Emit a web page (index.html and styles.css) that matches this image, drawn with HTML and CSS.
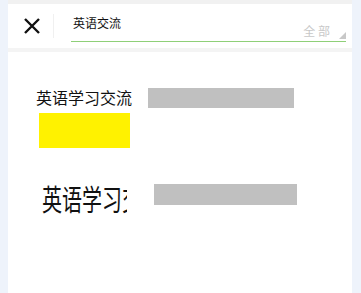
FILE: index.html
```html
<!DOCTYPE html>
<html>
<head>
<meta charset="utf-8">
<link rel="stylesheet" href="styles.css">
</head>
<body>
<div class="page">
  <div class="status"></div>
  <div class="header">
    <div class="close">
      <svg width="18" height="18" viewBox="0 0 18 18"><path d="M2 2 L16 16 M16 2 L2 16" stroke="#111" stroke-width="2.4" fill="none"/></svg>
    </div>
    <div class="divider"></div>
    <div class="search">
      <span class="query">英语交流</span>
      <span class="scope">全 部</span>
      <span class="tri"></span>
    </div>
  </div>
  <div class="gap"></div>
  <div class="card">
    <div class="row1">
      <div class="left">
        <div class="title">英语学习交流</div>
        <div class="yellow"></div>
      </div>
      <div class="bar bar1"></div>
    </div>
    <div class="row2">
      <div class="big"><span class="stretch">英语学习交流</span></div>
      <div class="bar bar2"></div>
    </div>
  </div>
</div>
</body>
</html>
```
FILE: styles.css
```css
html, body { margin: 0; padding: 0; }
body {
  background: #eef3fb;
  font-family: "Noto Sans CJK SC", "Noto Sans", sans-serif;
  width: 361px;
  height: 293px;
  overflow: hidden;
}
.page {
  margin-left: 8px;
  width: 344px;
  background: #fff;
  height: 293px;
  display: flex;
  flex-direction: column;
}
.status {
  height: 4px;
  background: #f1f1f1;
}
.header {
  height: 44px;
  display: flex;
  align-items: flex-start;
  background: #fff;
}
.close {
  width: 18px;
  height: 18px;
  margin-left: 15px;
  margin-top: 13px;
  display: flex;
}
.divider {
  width: 1px;
  height: 24px;
  background: #f0f0f0;
  margin-left: 12px;
  margin-top: 10px;
}
.search {
  margin-left: 17px;
  width: 275px;
  height: 37px;
  border-bottom: 1px solid #8fcf78;
  position: relative;
}
.query {
  position: absolute;
  left: 2px;
  top: 12px;
  font-size: 12px;
  line-height: 14px;
  color: #111;
}
.scope {
  position: absolute;
  right: 16px;
  top: 20px;
  font-size: 12px;
  line-height: 14px;
  color: #c8c8c8;
}
.tri {
  position: absolute;
  right: 0;
  bottom: 2px;
  width: 0;
  height: 0;
  border-left: 7px solid transparent;
  border-bottom: 7px solid #c8c8c8;
}
.gap {
  height: 4px;
  background: #f4f4f4;
}
.card {
  flex: 1;
  background: #fff;
}
.row1 {
  display: flex;
  margin-top: 36px;
  padding-left: 28px;
}
.left { display: flex; flex-direction: column; }
.title {
  font-size: 16px;
  line-height: 22px;
  color: #111;
  margin-top: -2px;
}
.yellow {
  width: 91px;
  height: 35px;
  background: #fff200;
  margin-left: 3px;
  margin-top: 5px;
}
.bar {
  background: #c0c0c0;
}
.bar1 {
  width: 146px;
  height: 20px;
  margin-left: 16px;
}
.row2 {
  display: flex;
  margin-top: 35px;
  padding-left: 34px;
}
.big {
  width: 85px;
  height: 32px;
  overflow: hidden;
  white-space: nowrap;
  font-size: 20px;
  line-height: 22px;
  color: #111;
}
.stretch {
  display: inline-block;
  transform: scaleY(1.45);
  transform-origin: 0 0;
}
.bar2 {
  width: 143px;
  height: 21px;
  margin-left: 27px;
  margin-top: 1px;
}
```
